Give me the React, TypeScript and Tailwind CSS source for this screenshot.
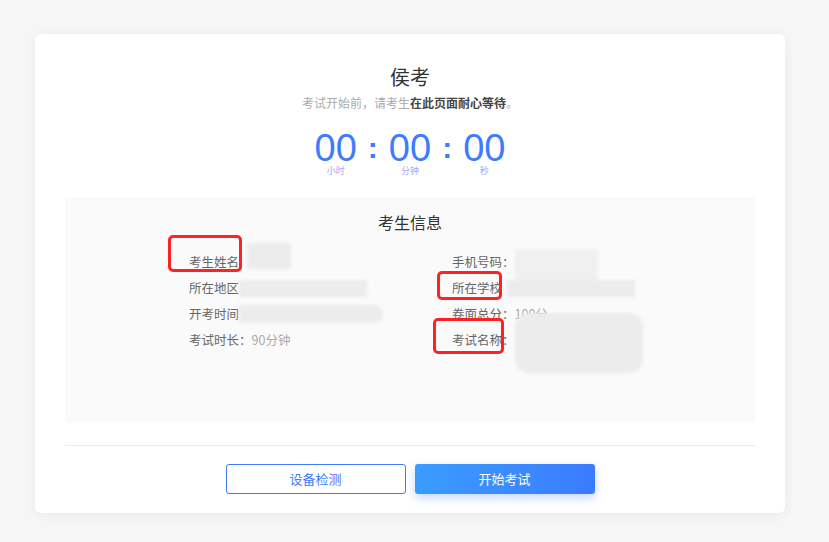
import React from 'react';

const font = { fontFamily: '"Noto Sans CJK SC", "Liberation Sans", sans-serif' };

function Blur({ className }: { className: string }) {
  return <div className={`bg-[#ececec] blur-[1.5px] ${className}`} />;
}

function Segment({ value, label }: { value: string; label: string }) {
  return (
    <div className="flex flex-col items-center">
      <div className="text-[38px] leading-[36px] text-[#3d7bff] font-['Liberation_Sans',sans-serif]">{value}</div>
      <div className="text-[9px] leading-[10px] text-[#a9a6f5]">{label}</div>
    </div>
  );
}

function Colon() {
  return <div className="text-[30px] leading-[36px] text-[#3d7bff] font-bold font-['Liberation_Sans',sans-serif] mx-[11px] self-start">:</div>;
}

export default function App() {
  return (
    <div className="min-h-[542px] w-[829px] bg-[#f6f6f6] pl-[35px] pt-[34px]" style={font}>
      <div className="relative w-[750px] h-[479px] bg-white rounded-[6px] shadow-[0_2px_12px_rgba(0,0,0,0.06)] px-[30px] pt-[30px]">
        {/* Header */}
        <div className="flex flex-col items-center">
          <h1 className="text-[20px] leading-[26px] text-[#333] font-normal">侯考</h1>
          <p className="text-[12px] leading-[18px] text-[#aaa] mt-[4px]">
            考试开始前，请考生<span className="text-[#444] font-bold">在此页面耐心等待</span>。
          </p>
          <div className="flex items-start mt-[18px]">
            <Segment value="00" label="小时" />
            <Colon />
            <Segment value="00" label="分钟" />
            <Colon />
            <Segment value="00" label="秒" />
          </div>
        </div>

        {/* Info panel */}
        <div className="relative mt-[21px] w-[690px] h-[225px] bg-[#fafafa] pt-[14px]">
          <h2 className="text-center text-[16px] leading-[22px] text-[#333] font-normal">考生信息</h2>
          <div className="grid grid-cols-[263px_200px] pl-[124px] mt-[16px] text-[12.5px] leading-[26px] text-[#666]">
            <div className="flex flex-col">
              <div className="flex items-center h-[26px]">
                <span>考生姓名</span>
                <Blur className="ml-[8px] w-[44px] h-[26px] -mt-[12px]" />
              </div>
              <div className="flex items-center h-[26px]">
                <span>所在地区</span>
                <Blur className="w-[128px] h-[17px]" />
              </div>
              <div className="flex items-center h-[26px]">
                <span>开考时间</span>
                <Blur className="w-[144px] h-[18px] rounded-r-[10px]" />
              </div>
              <div className="flex items-center h-[26px]">
                <span>考试时长：</span>
                <span className="text-[#aaa]">90分钟</span>
              </div>
            </div>
            <div className="flex flex-col">
              <div className="flex items-center h-[26px]">
                <span>手机号码：</span>
                <Blur className="w-[83px] h-[36px] mt-[10px] bg-[#f0f0f0]" />
              </div>
              <div className="flex items-center h-[26px]">
                <span>所在学校</span>
                <Blur className="ml-[5px] w-[128px] h-[17px]" />
              </div>
              <div className="flex items-center h-[26px]">
                <span>卷面总分：</span>
                <span className="text-[#aaa]">100分</span>
              </div>
              <div className="flex items-start h-[26px]">
                <span>考试名称：</span>
                <Blur className="w-[128px] h-[60px] mt-[-14px] rounded-[14px]" />
              </div>
            </div>
          </div>

          {/* Red annotation boxes */}
          <div className="absolute left-[103px] top-[38px] w-[74px] h-[37px] border-[3px] border-[#f22] rounded-[5px]" />
          <div className="absolute left-[372px] top-[74px] w-[65px] h-[29px] border-[3px] border-[#f22] rounded-[5px]" />
          <div className="absolute left-[368px] top-[121px] w-[71px] h-[36px] border-[3px] border-[#f22] rounded-[5px]" />
        </div>

        {/* Divider */}
        <div className="mt-[23px] w-[690px] h-px bg-[#ebebeb]" />

        {/* Buttons */}
        <div className="flex justify-center gap-[9px] mt-[18px]">
          <button className="w-[180px] h-[30px] border border-[#3d7bff] rounded-[3px] text-[13px] text-[#3d7bff] bg-white">
            设备检测
          </button>
          <button className="w-[180px] h-[30px] rounded-[3px] text-[13px] text-white bg-gradient-to-r from-[#3a9cff] to-[#3b7bff] shadow-[0_4px_10px_rgba(61,123,255,0.3)]">
            开始考试
          </button>
        </div>
      </div>
    </div>
  );
}
